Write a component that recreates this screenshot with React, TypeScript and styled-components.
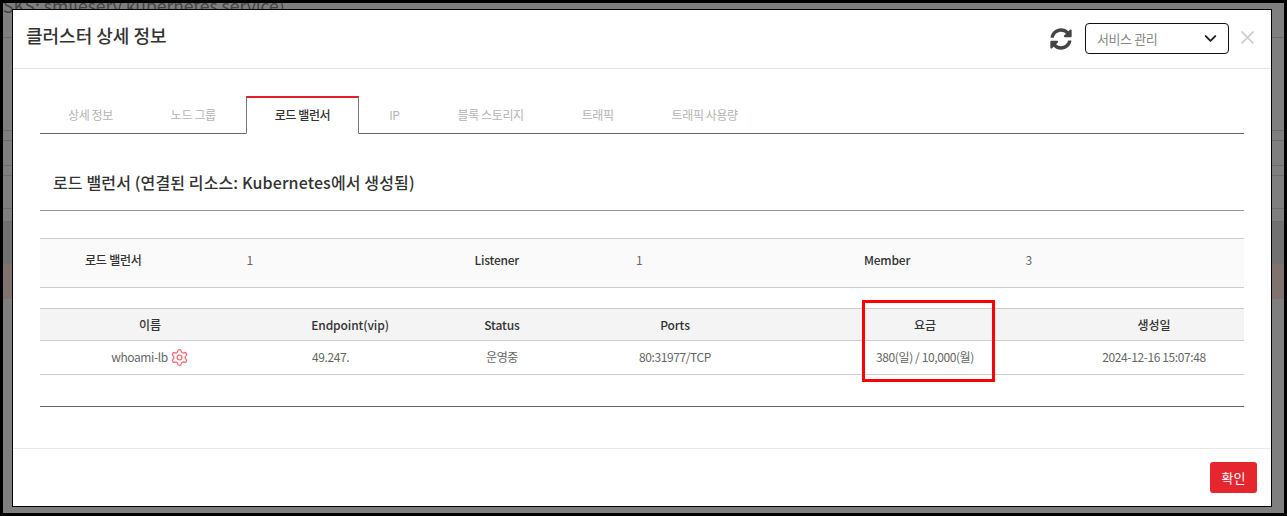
import React from "react";
import styled, { createGlobalStyle } from "styled-components";
import { FaSyncAlt } from "react-icons/fa";
import { Settings } from "lucide-react";
import { FiChevronDown } from "react-icons/fi";

const Global = createGlobalStyle`
  html, body { margin: 0; padding: 0; background: #000; }
  * { box-sizing: border-box; }
  body { font-family: "Noto Sans CJK KR", "Noto Sans", sans-serif; overflow: hidden; }
`;

const Screen = styled.div`
  position: relative;
  width: 1287px;
  height: 516px;
  padding: 3px;
  overflow: hidden;
  background: #000;
`;
const Backdrop = styled.div`
  height: 100%;
  background: #7f7f7f;
  overflow: hidden;
  color: #444;
`;
const BackTitle = styled.div`
  font-size: 17.5px;
  line-height: 11px;
  white-space: nowrap;
  height: 38px;
  border-bottom: 1px solid #6a6a6a;
  margin-top: -3px;
`;
const BackRow = styled.div<{ $h: number; $bg?: string; $line?: boolean }>`
  height: ${(p) => p.$h}px;
  background: ${(p) => p.$bg || "transparent"};
  border-bottom: ${(p) => (p.$line ? "1px solid #6c6c6c" : "0")};
`;
const Modal = styled.div`
  position: absolute;
  left: 12px;
  top: 9px;
  width: 1260px;
  height: 498px;
  background: #fff;
  border: 1px solid #000;
  display: flex;
  flex-direction: column;
`;
const Header = styled.header`
  height: 59px;
  flex: none;
  display: flex;
  align-items: center;
  padding: 0 17px 2px 13px;
  border-bottom: 1px solid #e2e2e2;
`;
const Title = styled.h2`
  margin: 0 0 7px;
  flex: 1;
  font-size: 18px;
  font-weight: 500;
  color: #333;
`;
const Refresh = styled.span`
  display: flex;
  color: #444;
  font-size: 22px;
  margin: 2px 13px 0 0;
`;
const Select = styled.div`
  width: 144px;
  height: 31px;
  border: 1px solid #111;
  border-radius: 4px;
  display: flex;
  align-items: center;
  justify-content: space-between;
  padding: 0 8px 0 11px;
  font-size: 13px;
  letter-spacing: -0.4px;
  color: #888;
  svg { color: #222; font-size: 19px; stroke-width: 2.5; }
`;
const Close = styled.svg`
  margin: 0 0 2px 12px;
  width: 13px;
  height: 13px;
  stroke: #ccc;
  stroke-width: 1.6;
`;
const Body = styled.div`
  flex: 1;
  padding: 27px 27px 0;
`;
const Tabs = styled.div`
  display: flex;
  height: 38px;
  border-bottom: 1px solid #666;
`;
const Tab = styled.div<{ $active?: boolean }>`
  padding: 0 28px 3px;
  margin: 0 ${(p) => (p.$active ? "1px" : "0")};
  height: ${(p) => (p.$active ? "38px" : "37px")};
  display: flex;
  align-items: center;
  font-size: 12px;
  letter-spacing: -0.4px;
  white-space: nowrap;
  color: ${(p) => (p.$active ? "#333" : "#b4b4b4")};
  font-weight: ${(p) => (p.$active ? 500 : 400)};
  background: #fff;
  border: 1px solid ${(p) => (p.$active ? "#777" : "transparent")};
  border-top: 2px solid ${(p) => (p.$active ? "#e3202a" : "transparent")};
  border-bottom: ${(p) => (p.$active ? "1px solid #fff" : "0")};
  &:first-child { margin-left: -1px; }
`;
const Section = styled.h3`
  margin: 0;
  height: 77px;
  display: flex;
  align-items: center;
  padding: 20px 0 0 13px;
  font-size: 16px;
  letter-spacing: 0.13px;
  font-weight: 500;
  color: #333;
  border-bottom: 1px solid #999;
`;
const Summary = styled.div`
  margin-top: 27px;
  height: 50px;
  padding-bottom: 7px;
  display: grid;
  grid-template-columns: repeat(3, 389.5px);
  align-items: center;
  background: #fafafa;
  border-top: 1px solid #ccc;
  border-bottom: 1px solid #ccc;
  font-size: 12px;
`;
const SummaryItem = styled.div`
  display: flex;
  padding-left: 45px;
`;
const SummaryLabel = styled.span`
  width: 161.5px;
  font-weight: 500;
  letter-spacing: -0.2px;
  color: #333;
`;
const SummaryValue = styled.span`
  color: #666;
`;
const Grid = styled.div`
  display: grid;
  grid-template-columns: 220px 180px 124px 222px 278px 180px;
  align-items: center;
  text-align: center;
  font-size: 12px;
`;
const HeadRow = styled(Grid)`
  margin-top: 20px;
  height: 33px;
  background: #f4f4f4;
  border-top: 1px solid #ccc;
  border-bottom: 1px solid #ccc;
  font-weight: 500;
  letter-spacing: -0.1px;
  color: #333;
`;
const DataRow = styled(Grid)`
  height: 34px;
  padding-bottom: 2px;
  border-bottom: 1px solid #ccc;
  letter-spacing: -0.4px;
  color: #666;
`;
const NameCell = styled.div`
  display: flex;
  align-items: center;
  justify-content: center;
  gap: 2px;
  svg { color: #f0727b; margin-top: 1px; }
`;
const IpCell = styled.div`
  text-align: left;
  padding-left: 52px;
`;
const TableEnd = styled.div`
  margin-top: 31px;
  border-bottom: 1px solid #666;
`;
const Footer = styled.footer`
  height: 58px;
  flex: none;
  display: flex;
  justify-content: flex-end;
  align-items: flex-start;
  padding: 13px 14px 0 0;
  border-top: 1px solid #e8e8e8;
`;
const Confirm = styled.button`
  width: 47px;
  height: 31px;
  border: 0;
  border-radius: 3px;
  background: #e6262e;
  color: #fff;
  font: 400 13px "Noto Sans CJK KR", sans-serif;
`;
const Highlight = styled.div`
  position: absolute;
  left: 862px;
  top: 300px;
  width: 133px;
  height: 82px;
  border: 3px solid #f00;
`;

const tabs = ["상세 정보", "노드 그룹", "로드 밸런서", "IP", "블록 스토리지", "트래픽", "트래픽 사용량"];

export default function App() {
  return (
    <Screen>
      <Global />
      <Backdrop>
        <BackTitle>SKS: smileserv kubernetes service)</BackTitle>
        <BackRow $h={93} $line />
        <BackRow $h={10} $line />
        <BackRow $h={25} $line />
        <BackRow $h={10} $line />
        <BackRow $h={33} $line />
        <BackRow $h={13} $line />
        <BackRow $h={42} $bg="#717171" />
        <BackRow $h={35} $bg="#80736f" />
      </Backdrop>
      <Modal>
        <Header>
          <Title>클러스터 상세 정보</Title>
          <Refresh><FaSyncAlt /></Refresh>
          <Select>서비스 관리<FiChevronDown /></Select>
          <Close viewBox="0 0 13 13"><path d="M0.5 0.5L12.5 12.5M12.5 0.5L0.5 12.5" /></Close>
        </Header>
        <Body>
          <Tabs>
            {tabs.map((t) => (
              <Tab key={t} $active={t === "로드 밸런서"}>{t}</Tab>
            ))}
          </Tabs>
          <Section>로드 밸런서 (연결된 리소스: Kubernetes에서 생성됨)</Section>
          <Summary>
            <SummaryItem><SummaryLabel>로드 밸런서</SummaryLabel><SummaryValue>1</SummaryValue></SummaryItem>
            <SummaryItem><SummaryLabel>Listener</SummaryLabel><SummaryValue>1</SummaryValue></SummaryItem>
            <SummaryItem><SummaryLabel>Member</SummaryLabel><SummaryValue>3</SummaryValue></SummaryItem>
          </Summary>
          <HeadRow>
            <div>이름</div><div>Endpoint(vip)</div><div>Status</div><div>Ports</div><div>요금</div><div>생성일</div>
          </HeadRow>
          <DataRow>
            <NameCell>whoami-lb<Settings size={19} strokeWidth={1.7} /></NameCell>
            <IpCell>49.247.</IpCell><div>운영중</div><div>80:31977/TCP</div><div>380(일) / 10,000(월)</div><div>2024-12-16 15:07:48</div>
          </DataRow>
          <TableEnd />
        </Body>
        <Footer><Confirm>확인</Confirm></Footer>
      </Modal>
      <Highlight />
    </Screen>
  );
}
